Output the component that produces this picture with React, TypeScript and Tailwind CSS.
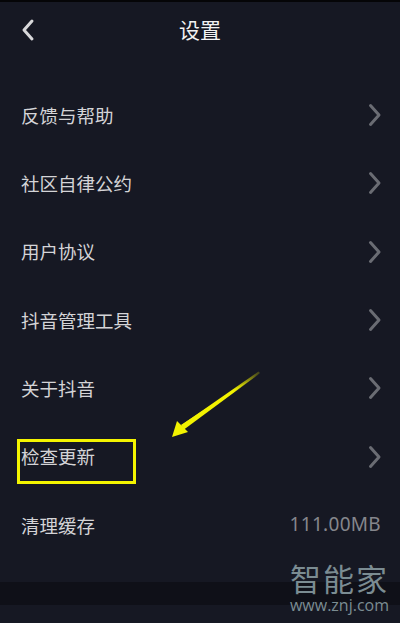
import React from "react";

const rows = ["反馈与帮助", "社区自律公约", "用户协议", "抖音管理工具", "关于抖音", "检查更新"];

const Chevron = () => (
  <svg width="14" height="24" viewBox="0 0 14 24" className="shrink-0">
    <path d="M2.5 2.5 L11 12 L2.5 21.5" fill="none" stroke="#6a6c73" strokeWidth="3" strokeLinecap="round" strokeLinejoin="round" />
  </svg>
);

export default function App() {
  const font = { fontFamily: '"Noto Sans CJK SC", "Noto Sans", sans-serif' };
  return (
    <div className="relative w-[400px] h-[623px] overflow-hidden bg-[#161823]" style={font}>
      <div className="h-[2px] bg-[#050507]" />
      {/* header */}
      <div className="relative h-[58px] flex items-start justify-center pt-[17px]">
        <svg width="16" height="24" viewBox="0 0 16 24" className="absolute left-[20px] top-[16px]">
          <path d="M12 3 L4 12 L12 21" fill="none" stroke="#d8d8da" strokeWidth="3" strokeLinecap="round" strokeLinejoin="round" />
        </svg>
        <span className="text-[21px] text-[#f2f2f2] leading-none">设置</span>
      </div>
      {/* list */}
      <div className="pt-[21px] flex flex-col">
        {rows.map((r) => (
          <div key={r} className="h-[68.3px] flex items-center justify-between pl-[21px] pr-[18px]">
            <span className="text-[18.5px] text-[#d4d4d7] leading-none">{r}</span>
            <Chevron />
          </div>
        ))}
        <div className="h-[68.3px] flex items-center justify-between pl-[21px] pr-[19px]">
          <span className="text-[18.5px] text-[#d4d4d7] leading-none">清理缓存</span>
          <span className="text-[19px] text-[#85868c] leading-none tracking-[0.3px]" style={{ fontFamily: '"Noto Sans", sans-serif' }}>111.00MB</span>
        </div>
      </div>
      {/* bottom band */}
      <div className="absolute left-0 right-0 top-[582px] h-[23px] bg-[#0f1018]" />

      {/* yellow highlight box */}
      <div className="absolute left-[17px] top-[439px] w-[119px] h-[45px] border-[3px] border-[#f4f400]" />
      {/* arrow */}
      <svg className="absolute left-0 top-0" width="400" height="623" viewBox="0 0 400 623">
        <defs>
          <linearGradient id="ag" x1="260" y1="373" x2="172" y2="437" gradientUnits="userSpaceOnUse">
            <stop offset="0" stopColor="#f2f200" stopOpacity="0.2" />
            <stop offset="0.3" stopColor="#f2f200" stopOpacity="1" />
            <stop offset="1" stopColor="#f2f200" stopOpacity="1" />
          </linearGradient>
        </defs>
        <polygon points="260,373 183,427 181.5,425 258.5,371.5" fill="url(#ag)" />
        <polygon points="260,373.2 184,429.5 181,425" fill="url(#ag)" />
        <polygon points="172,437 177,421 188,432" fill="#f2f200" />
      </svg>

      {/* watermark */}
      <div className="absolute left-[289px] top-[562px] w-[101px] flex flex-col items-center">
        <span className="text-[31px] leading-[31px] text-[#7b8c92] tracking-[2px]">智能家</span>
        <span className="text-[16px] leading-[16px] mt-[4px] text-[#7b8c92]" style={{ fontFamily: '"Open Sans", sans-serif' }}>www.znj.com</span>
      </div>
    </div>
  );
}
